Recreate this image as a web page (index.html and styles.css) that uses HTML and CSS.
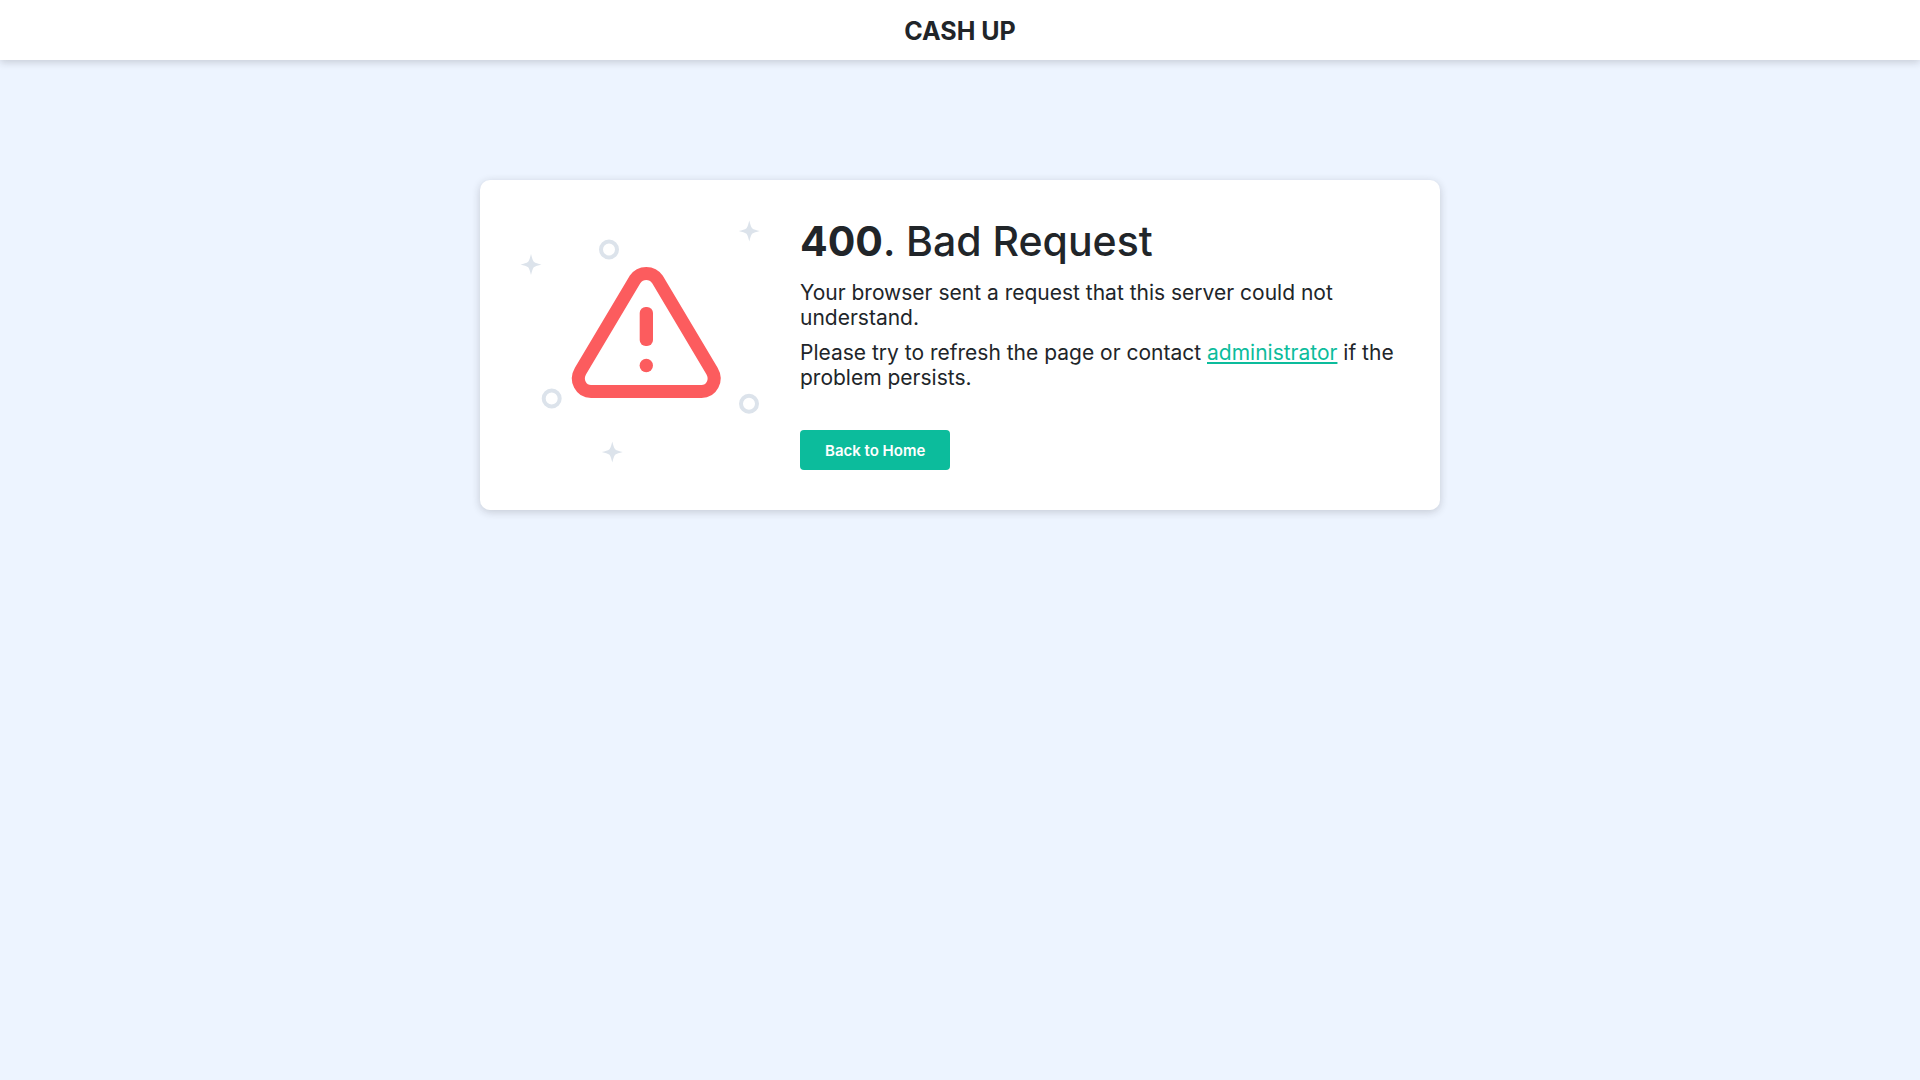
FILE: index.html
```html
<!DOCTYPE html>
<html lang="en">
<head>
<meta charset="utf-8">
<meta name="viewport" content="width=device-width, initial-scale=1">
<title>400. Bad Request</title>
<link rel="stylesheet" href="styles.css">
</head>
<body>
<header class="site-header">CASH UP</header>
<main class="card">
  <svg class="illustration" viewBox="0 0 240 250" aria-hidden="true">
    <defs>
      <path id="star" d="M0-10.500C1-7 1.400-4.500 2.800-2.800 4.500-1.400 7-1 10.500 0 7 1 4.500 1.400 2.800 2.800 1.400 4.500 1 7 0 10.500-1 7-1.400 4.500-2.800 2.800-4.500 1.400-7 1-10.500 0-7-1-4.500-1.400-2.800-2.800-1.400-4.500-1-7 0-10.500Z"/>
    </defs>
    <g class="stars">
      <use href="#star" x="11" y="44.500"/>
      <use href="#star" x="229.300" y="11"/>
      <use href="#star" x="92.300" y="232"/>
    </g>
    <g class="rings">
      <circle cx="89" cy="29.500" r="8"/>
      <circle cx="31.700" cy="178.500" r="8"/>
      <circle cx="229" cy="183.700" r="8"/>
    </g>
    <path class="warning-outline" d="M115 59.500L60.500 151C55 160.500 61 171.500 71 171.500H181.500C191.500 171.500 197.500 160.500 192 151L137.500 59.500C132 51.500 120.500 51.500 115 59.500Z"/>
    <rect class="warning-mark" x="119.700" y="87" width="13.300" height="39" rx="6"/>
    <circle class="warning-mark" cx="126.300" cy="145.500" r="6.700"/>
  </svg>
  <div class="content">
    <h1 class="title"><strong>400</strong>. Bad Request</h1>
    <p class="text">Your browser sent a request that this server could not understand.</p>
    <p class="text">Please try to refresh the page or contact <a class="link" href="mailto:administrator">administrator</a> if the problem persists.</p>
    <button class="button" type="button">Back to Home</button>
  </div>
</main>
</body>
</html>
```
FILE: styles.css
```css
* {
  box-sizing: border-box;
}

body {
  margin: 0;
  min-height: 100vh;
  background: #edf4ff;
  color: #212529;
  font-family: Inter, "Open Sans", sans-serif;
  font-size: 21px;
  line-height: 25px;
}

.site-header {
  padding: 16px 20px 14px;
  background: #fff;
  box-shadow: 0 2px 8px rgba(33, 37, 41, 0.2);
  font-size: 25px;
  font-weight: 700;
  line-height: 30px;
  text-align: center;
}

.card {
  display: flex;
  gap: 40px;
  width: 50%;
  min-width: 720px;
  margin: 120px auto 0;
  padding: 40px;
  border-radius: 10px;
  background: #fff;
  box-shadow: 0 2px 8px rgba(33, 37, 41, 0.2);
}

.illustration {
  flex: none;
  width: 240px;
  height: 250px;
}

.stars {
  fill: #dce3eb;
}

.rings {
  fill: none;
  stroke: #dce3eb;
  stroke-width: 4;
}

.warning-outline {
  fill: none;
  stroke: #fc5c5e;
  stroke-width: 13;
}

.warning-mark {
  fill: #fc5c5e;
}

.content {
  flex: 1;
}

.title {
  margin: 0 0 18px;
  font-size: 41px;
  font-weight: 500;
  line-height: 42px;
}

.title strong {
  font-weight: 700;
}

.text {
  margin: 0 0 10px;
}

.link {
  color: #0cbc9c;
}

.button {
  display: block;
  height: 40px;
  margin-top: 40px;
  padding: 0 25px;
  border: 0;
  border-radius: 4px;
  background: #0cbc9c;
  color: #fff;
  font: inherit;
  font-size: 15px;
  font-weight: 600;
}
```
